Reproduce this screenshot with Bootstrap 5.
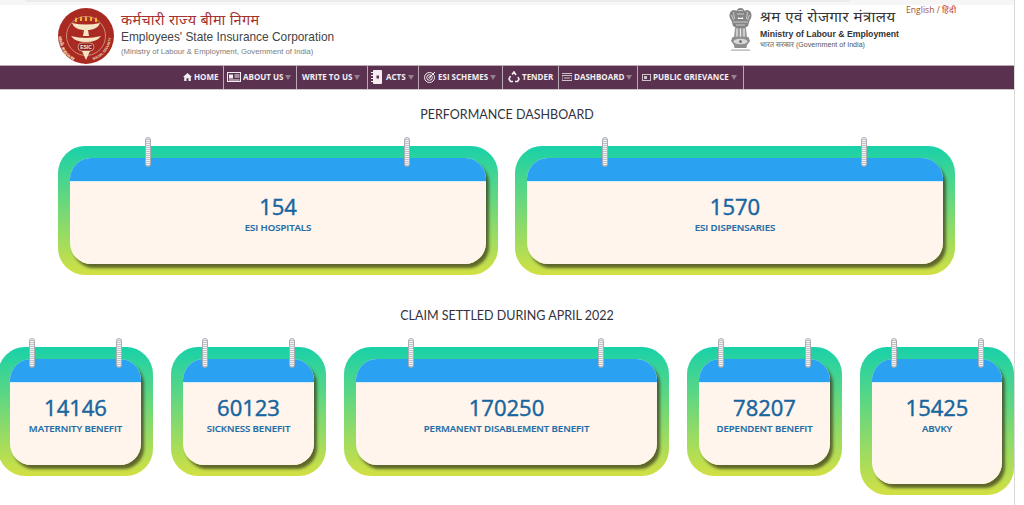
<!DOCTYPE html>
<html lang="en">

<head>
    <meta charset="UTF-8">
    <meta name="viewport" content="width=device-width, initial-scale=1.0">
    <title>ESIC Performance Dashboard</title>
    <link href="https://cdn.jsdelivr.net/npm/bootstrap@5.3.1/dist/css/bootstrap.min.css" rel="stylesheet">
    <style>
        html, body {
            height: 505px;
            overflow: hidden;
            background: #fff;
        }

        .page-wrap {
            width: 1015px;
            height: 505px;
            border-right: 1px solid #d9d9d9;
            font-family: "Open Sans", sans-serif;
        }

        .top-strip {
            height: 5px;
            background: #f6f6f6;
        }

        .top-strip div {
            height: 2px;
            width: 825px;
            margin-left: 25px;
            background: #ececec;
            border-radius: 0 0 4px 4px;
        }

        .site-head {
            height: 60px;
            padding-left: 58px;
        }

        .brand-left {
            width: 671px;
            padding-top: 3px;
        }

        .brand-text {
            margin-left: 7px;
            font-family: "Liberation Sans", sans-serif;
        }

        .hi-title {
            font-family: "Noto Sans Devanagari", "Lohit Devanagari", "Liberation Serif", serif;
            color: #a6302b;
            font-size: 14.5px;
            line-height: 16px;
            margin-top: 6px;
            letter-spacing: .35px;
            white-space: nowrap;
        }

        .en-title {
            color: #444;
            font-size: 11.9px;
            line-height: 14px;
        }

        .en-sub {
            color: #7b7b7b;
            font-size: 7.7px;
            line-height: 12px;
            margin-top: 2px;
        }

        .brand-right {
            width: 285px;
            padding-top: 3px;
        }

        .min-text {
            width: 140px;
            margin-left: 8px;
            font-family: "Liberation Sans", sans-serif;
            white-space: nowrap;
        }

        .min-hi {
            font-family: "Noto Sans Devanagari", "Lohit Devanagari", "Liberation Serif", serif;
            font-size: 15px;
            line-height: 16px;
            letter-spacing: .55px;
            color: #333;
            margin-top: 3px;
        }

        .min-en {
            font-size: 8.7px;
            font-weight: 700;
            line-height: 11px;
            margin-top: 2px;
            color: #333;
        }

        .min-sub {
            font-size: 7.1px;
            line-height: 11px;
            color: #555;
        }

        .lang-links {
            font-size: 8.6px;
            line-height: 12px;
            color: #a4522f;
            margin: -4px 0 0 6px;
        }

        .lang-links span {
            color: #c0281f;
        }

        .main-bar {
            height: 25px;
            padding-left: 179px;
            background: #5a324f;
            border-top: 1px solid #b9aab4;
            border-bottom: 1px solid #cfc6cc;
        }

        .bar-item {
            height: 100%;
            padding-bottom: 1px;
            border-right: 1px solid #b9a9b4;
            color: #f4eef2;
            font-size: 8px;
            font-weight: 700;
            white-space: nowrap;
        }

        .bar-item svg {
            flex: none;
            margin-right: 2px;
        }

        .drop-tri {
            width: 0;
            height: 0;
            margin-left: 2px;
            border-left: 3px solid transparent;
            border-right: 3px solid transparent;
            border-top: 5px solid #94808f;
        }

        .sec-title {
            font-family: "Lato", sans-serif;
            font-size: 12.500px;
            line-height: 16px;
            color: #33313b;
            text-align: center;
        }

        .sec-one {
            margin: 17px 0 23px;
        }

        .sec-two {
            margin: 33px 0 23px;
        }

        .cards-top {
            padding-left: 58px;
            gap: 17px;
        }

        .cards-bottom {
            margin-left: -2px;
            gap: 18px;
        }

        .cal-card {
            position: relative;
            flex: none;
            height: 129px;
            padding: 12px 12px 11px;
            border-radius: 27px;
            background: linear-gradient(180deg, #18d1a9 0%, #d2e043 100%);
        }

        .cal-wide {
            width: 440px;
        }

        .cal-mid {
            width: 325px;
        }

        .cal-small {
            width: 155px;
        }

        .cal-tall {
            width: 154px;
            height: 148px;
        }

        .cal-inner {
            height: 100%;
            border-radius: 21px;
            overflow: hidden;
            background: #fff5ec;
            text-align: center;
        }

        .cal-shadow {
            height: 100%;
            border-radius: 21px;
            box-shadow: 3px 4px 3px rgba(62, 62, 32, .75);
        }

        .cal-top {
            height: 24px;
            background: #2aa2f1;
            border-bottom: 1px solid #d9eefc;
        }

        .cal-num {
            margin-top: 11px;
            font-size: 22px;
            line-height: 26px;
            font-weight: 500;
            color: #18659f;
            -webkit-text-stroke: .45px #18659f;
        }

        .cal-label {
            margin-top: 2px;
            font-size: 9.600px;
            line-height: 13px;
            font-weight: 600;
            color: #1f6ca6;
            letter-spacing: -.05px;
            -webkit-text-stroke: .2px #1f6ca6;
        }

        .cal-pin {
            position: absolute;
            top: -9px;
            width: 6px;
            height: 30px;
            border-radius: 3px;
            border: 1px solid #a9adb3;
            background: repeating-linear-gradient(180deg, #f2f3f4 0, #f2f3f4 1px, #bfc3c7 1px, #bfc3c7 2px);
        }

        .pin-a { left: 87px; }
        .pin-b { left: 346px; }
        .pin-c { left: 31px; }
        .pin-d { left: 118px; }
        .pin-e { left: 64px; }
        .pin-f { left: 254px; }
    </style>
</head>

<body>
    <div class="page-wrap">
        <div class="top-strip"><div></div></div>

        <header class="site-head d-flex">
            <div class="brand-left d-flex">
                <svg width="56" height="56" viewBox="0 0 56 56">
                    <defs>
                        <path id="ringR" d="M35 52 A25 25 0 0 0 52.600 24"/>
                        <path id="ringL" d="M17 50 A24.600 24.600 0 0 1 8 14"/>
                    </defs>
                    <circle cx="28" cy="28" r="28" fill="#a82a22"/>
                    <circle cx="28" cy="28" r="19.5" fill="none" stroke="#e9c9a5" stroke-width=".6"/>
                    <path d="M17 14q-1-3 1-5q2 2 1 5zM22 13q-1-3 1-5q2 2 1 5zM27 13q-1-3 1-5q2 2 1 5zM32 13q-1-3 1-5q2 2 1 5zM37 14q-1-3 1-5q2 2 1 5z" fill="#f4b43a"/>
                    <path d="M14 15q14 3 28 0q-2 6-11 7h-6q-9-1-11-7z" fill="#f6e5c4"/>
                    <path d="M26 22h4l1 6h-6z" fill="#f6e5c4"/>
                    <path d="M13 28q15 4 30 0q-4 6-15 6t-15-6z" fill="#f6e5c4"/>
                    <rect x="20" y="35" width="16" height="8" rx="4" fill="#8f1f1a" stroke="#f6e5c4" stroke-width=".6"/>
                    <text x="28" y="41" text-anchor="middle" font-size="5" font-weight="700" font-family="Liberation Sans, sans-serif" fill="#fbeedb">ESIC</text>
                    <path d="M24 43l4 9l4-9z" fill="#f6e5c4"/>
                    <text font-size="3.300" font-weight="700" font-family="Liberation Sans, sans-serif" fill="#f6e5c4"><textPath href="#ringR">SOCIAL SECURITY</textPath></text>
                    <text font-size="4.200" font-weight="700" font-family="Noto Sans Devanagari, Liberation Serif, serif" fill="#f6e5c4"><textPath href="#ringL">सामाजिक सुरक्षा</textPath></text>
                </svg>
                <div class="brand-text">
                    <div class="hi-title">कर्मचारी राज्य बीमा निगम</div>
                    <div class="en-title">Employees' State Insurance Corporation</div>
                    <div class="en-sub">(Ministry of Labour &amp; Employment, Government of India)</div>
                </div>
            </div>
            <div class="brand-right d-flex">
                <svg width="23" height="44" viewBox="0 0 23 44">
                    <g fill="#858585">
                        <ellipse cx="11.500" cy="5" rx="4.500" ry="5"/>
                        <ellipse cx="5" cy="7.500" rx="4.500" ry="5.500"/>
                        <ellipse cx="18" cy="7.500" rx="4.500" ry="5.500"/>
                        <path d="M2 11h19l-2 7l-3 2H7l-3-2z"/>
                        <path d="M4.500 4l1 7M2.500 7l2 5M8 6h7M18.500 4l-1 7M20.500 7l-2 5M9 2.500h5M4 14h15M7 17h9" fill="none" stroke="#dcdcdc" stroke-width=".8"/>
                        <path d="M6 20h11l1 9H5z" fill="#9a9a9a"/>
                        <path d="M8 20.500v8M11.500 20.500v8M15 20.500v8" stroke="#efefef" stroke-width="1.200"/>
                        <path d="M3.500 29h16l1.500 4l-3 4l-.5 3H5.500L5 37l-3-4z" fill="#8e8e8e"/>
                        <ellipse cx="11.500" cy="33.500" rx="7" ry="2.800" fill="#d8d8d8"/>
                        <circle cx="11.500" cy="33.500" r="1.500" fill="#777"/>
                        <rect x="2" y="41.500" width="19" height="1.200" fill="#aaa"/>
                    </g>
                </svg>
                <div class="min-text">
                    <div class="min-hi">श्रम एवं रोजगार मंत्रालय</div>
                    <div class="min-en">Ministry of Labour &amp; Employment</div>
                    <div class="min-sub">भारत सरकार (Government of India)</div>
                </div>
                <div class="lang-links text-nowrap">English / <span>हिंदी</span></div>
            </div>
        </header>

        <nav class="main-bar d-flex align-items-stretch">
            <div class="bar-item d-flex align-items-center" style="width:45px;padding-left:4px">
                <svg width="9" height="8" viewBox="0 0 9 8"><path d="M4.500 0L0 4h1.200v4h2.300V5.200h2V8h2.300V4H9z" fill="#f4eef2"/></svg>HOME
            </div>
            <div class="bar-item d-flex align-items-center" style="width:73px;padding-left:3px">
                <svg width="14" height="10" viewBox="0 0 14 10"><rect x=".5" y=".5" width="13" height="9" fill="none" stroke="#f4eef2"/><rect x="2" y="2.500" width="4" height="4" fill="#f4eef2"/><path d="M7.500 3h5M7.500 5h5M2 8h10.500" stroke="#f4eef2"/></svg>ABOUT US<span class="drop-tri"></span>
            </div>
            <div class="bar-item d-flex align-items-center" style="width:71px;padding-left:5px">WRITE TO US<span class="drop-tri"></span></div>
            <div class="bar-item d-flex align-items-center" style="width:51px;padding-left:3px">
                <svg width="11" height="14" viewBox="0 0 11 14" class="me-1"><rect x="2" y="0" width="9" height="14" rx="1" fill="#f4eef2"/><rect x="5.500" y="5.500" width="2.500" height="3" fill="#5a324f"/><path d="M0 2.500h3M0 5.500h3M0 8.500h3M0 11.500h3" stroke="#f4eef2"/></svg>ACTS<span class="drop-tri"></span>
            </div>
            <div class="bar-item d-flex align-items-center" style="width:84px;padding-left:5px">
                <svg width="12" height="12" viewBox="0 0 12 12" fill="none" stroke="#f4eef2"><circle cx="5.500" cy="6.500" r="5"/><circle cx="5.500" cy="6.500" r="2.800"/><circle cx="5.500" cy="6.500" r=".8"/><path d="M6 6l5-5"/></svg>ESI SCHEMES<span class="drop-tri"></span>
            </div>
            <div class="bar-item d-flex align-items-center" style="width:56px;padding-left:5px">
                <svg width="12" height="12" viewBox="0 0 12 12" fill="none" stroke="#f4eef2" stroke-width="1.600"><path d="M4 3.500L6 1l2 3M10 6l1 2.500l-1.500 2H7M5 10.500H2.500L1 8l1.500-3"/></svg>TENDER
            </div>
            <div class="bar-item d-flex align-items-center" style="width:79px;padding-left:3px">
                <svg width="10" height="8" viewBox="0 0 10 8"><path d="M0 .5h10" stroke="#cfc3cb"/><rect x="0" y="2.500" width="10" height="5" fill="none" stroke="#cfc3cb"/><path d="M2 5h6" stroke="#cfc3cb"/></svg>DASHBOARD<span class="drop-tri"></span>
            </div>
            <div class="bar-item d-flex align-items-center" style="width:106px;padding-left:4px">
                <svg width="9" height="8" viewBox="0 0 9 8"><rect x=".5" y="1.500" width="8" height="6" fill="none" stroke="#cfc3cb"/><rect x="2" y="3" width="3" height="3" fill="#cfc3cb"/></svg>PUBLIC GRIEVANCE<span class="drop-tri"></span>
            </div>
        </nav>

        <h2 class="sec-title fw-normal sec-one">PERFORMANCE DASHBOARD</h2>

        <section class="cards-top d-flex">
            <div class="cal-card cal-wide">
                <span class="cal-pin pin-a"></span><span class="cal-pin pin-b"></span>
                <div class="cal-shadow"><div class="cal-inner">
                    <div class="cal-top"></div>
                    <div class="cal-num">154</div>
                    <div class="cal-label">ESI HOSPITALS</div>
                </div></div>
            </div>
            <div class="cal-card cal-wide">
                <span class="cal-pin pin-a"></span><span class="cal-pin pin-b"></span>
                <div class="cal-shadow"><div class="cal-inner">
                    <div class="cal-top"></div>
                    <div class="cal-num">1570</div>
                    <div class="cal-label">ESI DISPENSARIES</div>
                </div></div>
            </div>
        </section>

        <h2 class="sec-title fw-normal sec-two">CLAIM SETTLED DURING APRIL 2022</h2>

        <section class="cards-bottom d-flex align-items-start">
            <div class="cal-card cal-small">
                <span class="cal-pin pin-c"></span><span class="cal-pin pin-d"></span>
                <div class="cal-shadow"><div class="cal-inner">
                    <div class="cal-top"></div>
                    <div class="cal-num">14146</div>
                    <div class="cal-label">MATERNITY BENEFIT</div>
                </div></div>
            </div>
            <div class="cal-card cal-small">
                <span class="cal-pin pin-c"></span><span class="cal-pin pin-d"></span>
                <div class="cal-shadow"><div class="cal-inner">
                    <div class="cal-top"></div>
                    <div class="cal-num">60123</div>
                    <div class="cal-label">SICKNESS BENEFIT</div>
                </div></div>
            </div>
            <div class="cal-card cal-mid">
                <span class="cal-pin pin-e"></span><span class="cal-pin pin-f"></span>
                <div class="cal-shadow"><div class="cal-inner">
                    <div class="cal-top"></div>
                    <div class="cal-num">170250</div>
                    <div class="cal-label">PERMANENT DISABLEMENT BENEFIT</div>
                </div></div>
            </div>
            <div class="cal-card cal-small">
                <span class="cal-pin pin-c"></span><span class="cal-pin pin-d"></span>
                <div class="cal-shadow"><div class="cal-inner">
                    <div class="cal-top"></div>
                    <div class="cal-num">78207</div>
                    <div class="cal-label">DEPENDENT BENEFIT</div>
                </div></div>
            </div>
            <div class="cal-card cal-tall">
                <span class="cal-pin pin-c"></span><span class="cal-pin pin-d"></span>
                <div class="cal-shadow"><div class="cal-inner">
                    <div class="cal-top"></div>
                    <div class="cal-num">15425</div>
                    <div class="cal-label">ABVKY</div>
                </div></div>
            </div>
        </section>
    </div>

    <script src="https://cdn.jsdelivr.net/npm/bootstrap@5.3.1/dist/js/bootstrap.bundle.min.js"></script>
</body>

</html>
